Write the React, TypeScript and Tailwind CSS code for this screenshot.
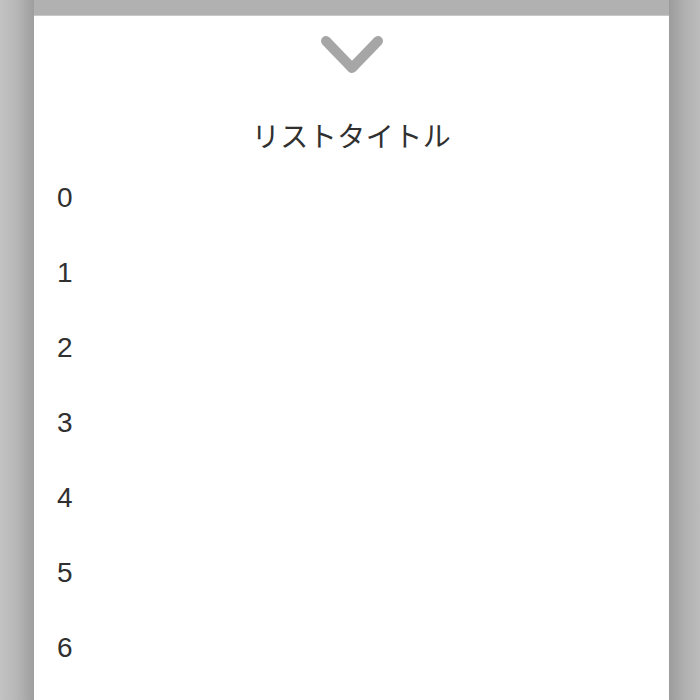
import React from "react";

const items: number[] = [0, 1, 2, 3, 4, 5, 6];

const App: React.FC = () => {
  return (
    <div className="w-[700px] h-[700px] overflow-hidden flex bg-[#b4b4b4] font-['Liberation_Sans','Noto_Sans_CJK_JP',sans-serif] text-[#303030]">
      {/* left gutter */}
      <div className="w-[34px] shrink-0 bg-gradient-to-r from-[#c3c3c3] via-[#b6b6b6] to-[#9e9e9e]" />

      {/* sheet column */}
      <div className="flex-1 flex flex-col">
        <div className="h-[16px] shrink-0 bg-[#b1b1b1] border-b border-[#c8c8c8]" />
        <div className="flex-1 bg-white flex flex-col">
          <div className="pt-[18px] flex justify-center">
            <svg width="66" height="40" viewBox="0 0 66 40" fill="none">
              <path
                d="M7 7 L33 34 L59 7"
                stroke="#a6a6a6"
                strokeWidth="10"
                strokeLinecap="round"
                strokeLinejoin="round"
              />
            </svg>
          </div>

          <div className="mt-[37px] h-[48px] flex items-center justify-center text-[28px] tracking-[0.5px] font-['Noto_Sans_CJK_JP',sans-serif]">
            リストタイトル
          </div>

          <ul className="mt-px">
            {items.map((n) => (
              <li key={n} className="h-[75px] flex items-center pl-[23px] text-[28px]">
                {n}
              </li>
            ))}
          </ul>
        </div>
      </div>

      {/* right gutter */}
      <div className="w-[31px] shrink-0 bg-gradient-to-r from-[#9c9c9c] via-[#b0b0b0] to-[#bcbcbc]" />
    </div>
  );
};

export default App;
